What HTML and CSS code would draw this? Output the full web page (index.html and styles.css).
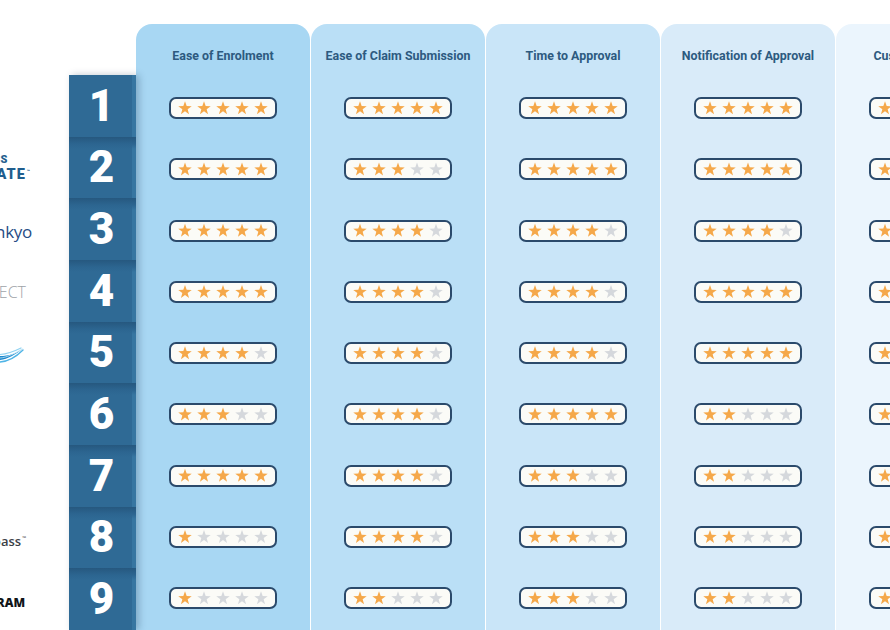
FILE: index.html
```html
<!DOCTYPE html>
<html lang="en">
<head>
<meta charset="utf-8">
<title>Ratings</title>
<link rel="stylesheet" href="styles.css">
</head>
<body>
<div class="board">
  <div class="logos">
    <div class="logo"></div>
    <div class="logo l2"><div class="stack"><span class="t1">ESS</span><span class="t2">CORPORATE<sup>™</sup></span></div></div>
    <div class="logo l3"><span>Daiichi-Sankyo</span></div>
    <div class="logo l4"><span>CONNECT</span></div>
    <div class="logo l5">
      <svg width="24" height="20" viewBox="0 0 24 20" aria-hidden="true">
        <path d="M0 17 C8 16 15 12 23.5 5 C16 11 9 13 0 13 Z" fill="#1e88cc"/>
        <path d="M0 19 C9 18.5 16 14 23 7" stroke="#4fb4e6" stroke-width="1.4" fill="none" stroke-linecap="round"/>
        <path d="M0 11.5 C7 11 13 9 21 5" stroke="#8fd2f1" stroke-width="1.2" fill="none" stroke-linecap="round"/>
        <path d="M0 15 C7 14.5 14 11 22 6" stroke="#bfe6f8" stroke-width="0.8" fill="none" stroke-linecap="round"/>
      </svg>
    </div>
    <div class="logo"></div>
    <div class="logo"></div>
    <div class="logo l8"><span>Compass<sup>™</sup></span></div>
    <div class="logo l9"><span>PROGRAM</span></div>
  </div>

  <div class="ranks">
    <div class="rank">1</div>
    <div class="rank">2</div>
    <div class="rank">3</div>
    <div class="rank">4</div>
    <div class="rank">5</div>
    <div class="rank">6</div>
    <div class="rank">7</div>
    <div class="rank">8</div>
    <div class="rank">9</div>
  </div>

  <div class="cols">
    <div class="col c1">
      <div class="head">Ease of Enrolment</div>
      <div class="cell"><div class="pill"><i class="on"></i><i class="on"></i><i class="on"></i><i class="on"></i><i class="on"></i></div></div>
      <div class="cell"><div class="pill"><i class="on"></i><i class="on"></i><i class="on"></i><i class="on"></i><i class="on"></i></div></div>
      <div class="cell"><div class="pill"><i class="on"></i><i class="on"></i><i class="on"></i><i class="on"></i><i class="on"></i></div></div>
      <div class="cell"><div class="pill"><i class="on"></i><i class="on"></i><i class="on"></i><i class="on"></i><i class="on"></i></div></div>
      <div class="cell"><div class="pill"><i class="on"></i><i class="on"></i><i class="on"></i><i class="on"></i><i></i></div></div>
      <div class="cell"><div class="pill"><i class="on"></i><i class="on"></i><i class="on"></i><i></i><i></i></div></div>
      <div class="cell"><div class="pill"><i class="on"></i><i class="on"></i><i class="on"></i><i class="on"></i><i class="on"></i></div></div>
      <div class="cell"><div class="pill"><i class="on"></i><i></i><i></i><i></i><i></i></div></div>
      <div class="cell"><div class="pill"><i class="on"></i><i></i><i></i><i></i><i></i></div></div>
    </div>
    <div class="col c2">
      <div class="head">Ease of Claim Submission</div>
      <div class="cell"><div class="pill"><i class="on"></i><i class="on"></i><i class="on"></i><i class="on"></i><i class="on"></i></div></div>
      <div class="cell"><div class="pill"><i class="on"></i><i class="on"></i><i class="on"></i><i></i><i></i></div></div>
      <div class="cell"><div class="pill"><i class="on"></i><i class="on"></i><i class="on"></i><i class="on"></i><i></i></div></div>
      <div class="cell"><div class="pill"><i class="on"></i><i class="on"></i><i class="on"></i><i class="on"></i><i></i></div></div>
      <div class="cell"><div class="pill"><i class="on"></i><i class="on"></i><i class="on"></i><i class="on"></i><i></i></div></div>
      <div class="cell"><div class="pill"><i class="on"></i><i class="on"></i><i class="on"></i><i class="on"></i><i></i></div></div>
      <div class="cell"><div class="pill"><i class="on"></i><i class="on"></i><i class="on"></i><i class="on"></i><i></i></div></div>
      <div class="cell"><div class="pill"><i class="on"></i><i class="on"></i><i class="on"></i><i class="on"></i><i></i></div></div>
      <div class="cell"><div class="pill"><i class="on"></i><i class="on"></i><i></i><i></i><i></i></div></div>
    </div>
    <div class="col c3">
      <div class="head">Time to Approval</div>
      <div class="cell"><div class="pill"><i class="on"></i><i class="on"></i><i class="on"></i><i class="on"></i><i class="on"></i></div></div>
      <div class="cell"><div class="pill"><i class="on"></i><i class="on"></i><i class="on"></i><i class="on"></i><i class="on"></i></div></div>
      <div class="cell"><div class="pill"><i class="on"></i><i class="on"></i><i class="on"></i><i class="on"></i><i></i></div></div>
      <div class="cell"><div class="pill"><i class="on"></i><i class="on"></i><i class="on"></i><i class="on"></i><i></i></div></div>
      <div class="cell"><div class="pill"><i class="on"></i><i class="on"></i><i class="on"></i><i class="on"></i><i></i></div></div>
      <div class="cell"><div class="pill"><i class="on"></i><i class="on"></i><i class="on"></i><i class="on"></i><i class="on"></i></div></div>
      <div class="cell"><div class="pill"><i class="on"></i><i class="on"></i><i class="on"></i><i></i><i></i></div></div>
      <div class="cell"><div class="pill"><i class="on"></i><i class="on"></i><i class="on"></i><i></i><i></i></div></div>
      <div class="cell"><div class="pill"><i class="on"></i><i class="on"></i><i class="on"></i><i></i><i></i></div></div>
    </div>
    <div class="col c4">
      <div class="head">Notification of Approval</div>
      <div class="cell"><div class="pill"><i class="on"></i><i class="on"></i><i class="on"></i><i class="on"></i><i class="on"></i></div></div>
      <div class="cell"><div class="pill"><i class="on"></i><i class="on"></i><i class="on"></i><i class="on"></i><i class="on"></i></div></div>
      <div class="cell"><div class="pill"><i class="on"></i><i class="on"></i><i class="on"></i><i class="on"></i><i></i></div></div>
      <div class="cell"><div class="pill"><i class="on"></i><i class="on"></i><i class="on"></i><i class="on"></i><i class="on"></i></div></div>
      <div class="cell"><div class="pill"><i class="on"></i><i class="on"></i><i class="on"></i><i class="on"></i><i class="on"></i></div></div>
      <div class="cell"><div class="pill"><i class="on"></i><i class="on"></i><i></i><i></i><i></i></div></div>
      <div class="cell"><div class="pill"><i class="on"></i><i class="on"></i><i></i><i></i><i></i></div></div>
      <div class="cell"><div class="pill"><i class="on"></i><i class="on"></i><i></i><i></i><i></i></div></div>
      <div class="cell"><div class="pill"><i class="on"></i><i class="on"></i><i></i><i></i><i></i></div></div>
    </div>
    <div class="col c5">
      <div class="head">Customer Service</div>
      <div class="cell"><div class="pill"><i class="on"></i><i class="on"></i><i class="on"></i><i class="on"></i><i class="on"></i></div></div>
      <div class="cell"><div class="pill"><i class="on"></i><i class="on"></i><i class="on"></i><i class="on"></i><i></i></div></div>
      <div class="cell"><div class="pill"><i class="on"></i><i class="on"></i><i class="on"></i><i class="on"></i><i></i></div></div>
      <div class="cell"><div class="pill"><i class="on"></i><i class="on"></i><i class="on"></i><i class="on"></i><i></i></div></div>
      <div class="cell"><div class="pill"><i class="on"></i><i class="on"></i><i class="on"></i><i class="on"></i><i></i></div></div>
      <div class="cell"><div class="pill"><i class="on"></i><i class="on"></i><i class="on"></i><i></i><i></i></div></div>
      <div class="cell"><div class="pill"><i class="on"></i><i class="on"></i><i class="on"></i><i></i><i></i></div></div>
      <div class="cell"><div class="pill"><i class="on"></i><i class="on"></i><i class="on"></i><i></i><i></i></div></div>
      <div class="cell"><div class="pill"><i class="on"></i><i class="on"></i><i></i><i></i><i></i></div></div>
    </div>
  </div>
</div>
</body>
</html>
```

FILE: styles.css
```css
html, body {
  margin: 0;
  padding: 0;
  background: #ffffff;
}
body {
  width: 890px;
  height: 630px;
  overflow: hidden;
  font-family: Roboto, "Liberation Sans", Arial, sans-serif;
}
.board {
  display: flex;
  align-items: flex-start;
  padding-top: 24px;
}

/* logos (cropped at left edge) */
.logos {
  width: 69px;
  flex-shrink: 0;
  margin-top: 51px;
  overflow: hidden;
}
.logo {
  height: 61.67px;
  box-sizing: border-box;
  display: flex;
  justify-content: flex-end;
  align-items: center;
  white-space: nowrap;
  overflow: hidden;
}
.logo sup {
  font-size: 5px;
  vertical-align: 6px;
  margin-left: 1px;
}
.l2 { padding-right: 38px; }
.l2 .stack {
  display: flex;
  flex-direction: column;
  align-items: flex-end;
  font-weight: 900;
  color: #1f5e8e;
  line-height: 1;
  padding-top: 2px;
}
.l2 .t1 { font-size: 11px; padding-right: 23px; margin-bottom: 3px; letter-spacing: 0.5px; }
.l2 .t2 { font-size: 14.5px; letter-spacing: 1px; }
.l3 {
  padding-right: 37px;
  padding-top: 4px;
  font-family: "Open Sans", sans-serif;
  font-size: 17px;
  color: #264c85;
  letter-spacing: -0.3px;
}
.l4 {
  padding-right: 43px;
  padding-top: 3px;
  font-family: "Open Sans", sans-serif;
  font-weight: 300;
  font-size: 16px;
  color: #9ea3a8;
}
.l5 { padding-right: 45px; padding-top: 2px; }
.l8 {
  padding-right: 43px;
  padding-top: 8px;
  font-family: "Open Sans", sans-serif;
  font-weight: 600;
  font-size: 13px;
  color: #3b4046;
}
.l9 {
  padding-right: 44px;
  padding-top: 6px;
  font-family: "Open Sans", sans-serif;
  font-weight: 800;
  font-size: 12px;
  color: #111418;
}

/* rank column */
.ranks {
  width: 67px;
  flex-shrink: 0;
  margin-top: 51px;
  position: relative;
  z-index: 2;
  background: #2f6a95;
  box-shadow: 3px 0 7px rgba(20, 50, 80, 0.28), inset -4px 0 0 #3776a1;
}
.rank {
  height: 61.67px;
  display: flex;
  align-items: center;
  justify-content: center;
  padding-right: 2px;
  box-sizing: border-box;
  color: #ffffff;
  font-family: Roboto, "Liberation Sans", sans-serif;
  font-weight: 900;
  font-size: 44px;
  line-height: 1;
  background: linear-gradient(#26587f 0, #2c6590 7px, rgba(47, 106, 149, 0) 12px);
}
.rank:first-child {
  background: none;
}

/* rating columns */
.cols {
  display: flex;
  gap: 1px;
  flex-shrink: 0;
}
.col {
  width: 174px;
  flex-shrink: 0;
  border-radius: 16px 16px 0 0;
  padding-bottom: 40px;
}
.c1 { background: #a8d7f3; }
.c2 { background: #badff6; }
.c3 { background: #c9e5f8; }
.c4 { background: #d9ebf9; }
.c5 { background: #ebf5fd; }
.head {
  height: 53.4px;
  box-sizing: border-box;
  padding-top: 24px;
  text-align: center;
  font-size: 12.4px;
  font-weight: 700;
  color: #2d5a80;
  line-height: 15px;
  white-space: nowrap;
}
.cell {
  height: 61.25px;
  display: flex;
  align-items: center;
  justify-content: center;
}
.pill {
  width: 108px;
  height: 22px;
  box-sizing: border-box;
  border: 2px solid #2b4a6b;
  border-radius: 7px;
  background: #fbfbf7;
  display: flex;
  align-items: center;
  justify-content: center;
  gap: 5px;
}
.pill i {
  display: block;
  width: 14px;
  height: 14px;
  background: #d5d8dc;
  clip-path: polygon(50% 2%, 62% 36%, 98% 37%, 69% 59%, 79% 94%, 50% 73%, 21% 94%, 31% 59%, 2% 37%, 38% 36%);
}
.pill i.on {
  background: #f5a84a;
}
```
